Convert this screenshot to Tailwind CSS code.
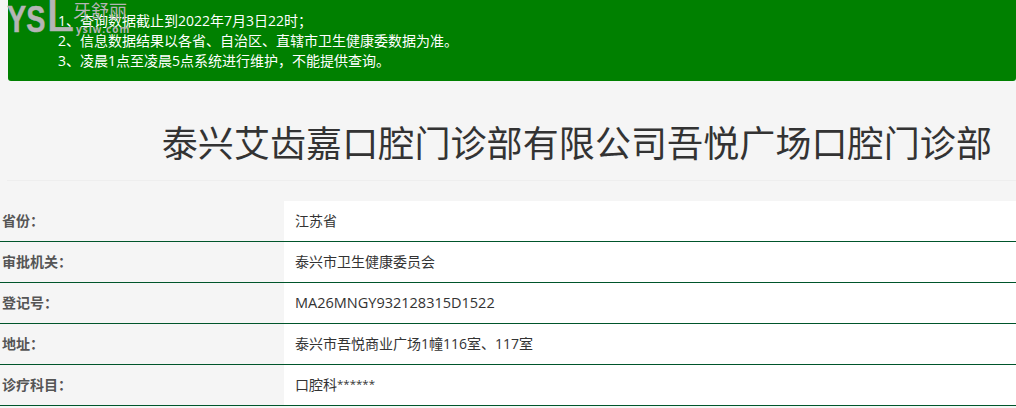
<!DOCTYPE html>
<html lang="zh">
<head>
    <meta charset="UTF-8">
    <title>诊所查询</title>
    <script src="https://cdn.jsdelivr.net/npm/@tailwindcss/browser@4"></script>
</head>
<body class="bg-[#f5f5f5] font-['Open_Sans','Noto_Sans_CJK_SC',sans-serif] text-[#333] overflow-hidden h-[408px] relative">

    <!-- watermark -->
    <div class="absolute left-[7px] top-0 z-10 w-[130px] h-[36px] text-[#b5b5b5]">
        <span class="absolute left-0 top-[0px] text-[36px] leading-[40px] font-bold font-['Liberation_Sans',sans-serif] origin-left scale-x-[0.8] [-webkit-text-stroke:0.5px_#b5b5b5]">YS</span>
        <span class="absolute left-[39px] top-[-6px] text-[44px] leading-[44px] font-['Liberation_Sans',sans-serif] origin-left scale-x-[1.15] [-webkit-text-stroke:0.6px_#b5b5b5]">L</span>
        <span class="absolute left-[66px] top-[1px] text-[18px] leading-[20px] whitespace-nowrap">牙舒丽</span>
        <span class="absolute left-[69px] top-[24px] text-[10px] leading-[10px] font-bold tracking-[1px] whitespace-nowrap">yslw.com</span>
    </div>

    <!-- notice -->
    <div class="ml-[8px] h-[81px] bg-[#008000] rounded-b-[3px] pl-[50px] pt-[11px] text-[14px] leading-[20px] text-white">
        <p>1、查询数据截止到2022年7月3日22时；</p>
        <p>2、信息数据结果以各省、自治区、直辖市卫生健康委数据为准。</p>
        <p>3、凌晨1点至凌晨5点系统进行维护，不能提供查询。</p>
    </div>

    <!-- title -->
    <div class="ml-[7px] h-[100px] border-b border-[#eeeeee] flex justify-end items-center pr-[24px] pt-[27px]">
        <h1 class="text-[36px] leading-[40px] font-normal whitespace-nowrap tracking-[0.1px]">泰兴艾齿嘉口腔门诊部有限公司吾悦广场口腔门诊部</h1>
    </div>

    <!-- info table -->
    <div class="mt-[20px] text-[14px]">
        <div class="flex h-[41px] border-b border-[#00552b]">
            <div class="w-[284px] pl-[2px] pb-[2px] flex items-center font-bold text-[#555]">省份：</div>
            <div class="flex-1 bg-white pl-[11px] pb-[2px] flex items-center">江苏省</div>
        </div>
        <div class="flex h-[41px] border-b border-[#00552b]">
            <div class="w-[284px] pl-[2px] pb-[2px] flex items-center font-bold text-[#555]">审批机关：</div>
            <div class="flex-1 bg-white pl-[11px] pb-[2px] flex items-center">泰兴市卫生健康委员会</div>
        </div>
        <div class="flex h-[41px] border-b border-[#00552b]">
            <div class="w-[284px] pl-[2px] pb-[2px] flex items-center font-bold text-[#555]">登记号：</div>
            <div class="flex-1 bg-white pl-[11px] flex items-center text-[14.5px]">MA26MNGY932128315D1522</div>
        </div>
        <div class="flex h-[41px] border-b border-[#00552b]">
            <div class="w-[284px] pl-[2px] pb-[2px] flex items-center font-bold text-[#555]">地址：</div>
            <div class="flex-1 bg-white pl-[11px] pb-[2px] flex items-center">泰兴市吾悦商业广场1幢116室、117室</div>
        </div>
        <div class="flex h-[41px] border-b border-[#00552b]">
            <div class="w-[284px] pl-[2px] pb-[2px] flex items-center font-bold text-[#555]">诊疗科目：</div>
            <div class="flex-1 bg-white pl-[11px] pb-[2px] flex items-center">口腔科<span class="text-[11.5px]">******</span></div>
        </div>
    </div>

</body>
</html>
